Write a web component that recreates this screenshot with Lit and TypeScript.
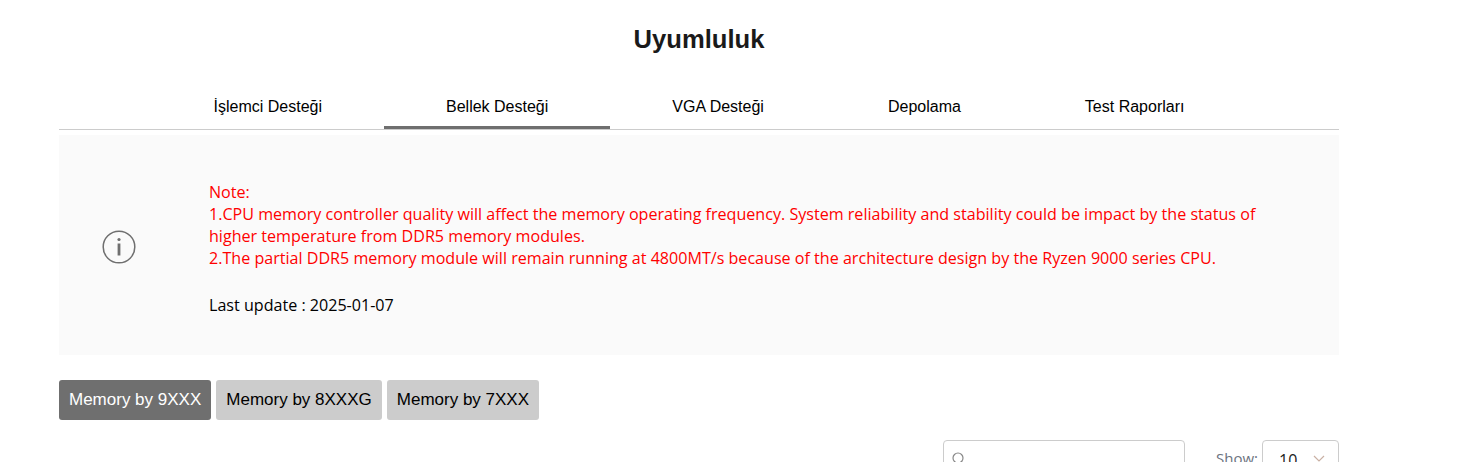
import { LitElement, html, css } from "lit";
import { customElement } from "lit/decorators.js";

@customElement("app-root")
export class AppRoot extends LitElement {
  static styles = css`
    :host { display: block; height: 462px; overflow: hidden; background: #fff; font-family: "Liberation Sans", Arial, sans-serif; color: #000; }
    .wrap { width: 1280px; margin-left: 59px; }
    h1 { margin: 0; padding-top: 24px; line-height: 30px; height: 30px; font-size: 25.6px; font-weight: 700; text-align: center; color: #1a1a1a; }
    .tabs { display: flex; justify-content: center; margin-top: 30px; border-bottom: 1px solid #ccc; height: 46px; box-sizing: border-box; }
    .tab { padding: 0 62px; font-size: 16px; line-height: 46px; height: 45px; box-sizing: border-box; white-space: nowrap; }
    .tab.active { border-bottom: 3px solid #6f6f6f; }
    .note { display: flex; align-items: center; margin-top: 5px; height: 220px; padding-top: 6px; background: #fafafa; box-sizing: border-box; }
    .ico { width: 120px; margin-right: 30px; padding-bottom: 2px; flex: none; display: flex; justify-content: center; }
    .ico svg { display: block; width: 34px; height: 34px; }
    .txt { flex: 1; padding-right: 70px; font-family: "Open Sans", sans-serif; font-size: 16.1px; line-height: 22px; color: #f00; }
    .txt p { margin: 0; }
    .upd { color: #000; margin-top: 25px !important; }
    .btns { display: flex; gap: 5px; margin-top: 25px; }
    .btn { height: 40px; line-height: 39px; padding: 0 10px; font-size: 17px; border-radius: 3px; background: #ccc; color: #000; white-space: nowrap; }
    .btn.active { background: #6f6f6f; color: #fff; }
    .tools { display: flex; justify-content: flex-end; align-items: flex-start; margin-top: 20px; }
    .search { width: 242px; height: 44px; box-sizing: border-box; border: 1px solid #ccc; border-radius: 4px; padding: 11px 8px; }
    .search svg { display: block; width: 14px; height: 14px; }
    .show { margin-left: 31px; padding-top: 8px; font-family: "Open Sans", sans-serif; font-size: 15px; color: #6c7380; }
    .sel { margin-left: 4px; width: 77px; height: 44px; box-sizing: border-box; border: 1px solid #ccc; border-radius: 4px; display: flex; align-items: flex-start; justify-content: space-between; padding: 8px 13px 0 16px; font-family: "Open Sans", sans-serif; font-size: 16px; color: #222; }
    .sel svg { width: 12px; height: 8px; margin-top: 6px; }
  `;
  render() {
    return html`<div class="wrap">
      <h1>Uyumluluk</h1>
      <div class="tabs">
        <div class="tab">İşlemci Desteği</div>
        <div class="tab active">Bellek Desteği</div>
        <div class="tab">VGA Desteği</div>
        <div class="tab">Depolama</div>
        <div class="tab">Test Raporları</div>
      </div>
      <div class="note">
        <div class="ico"><svg viewBox="0 0 34 34" fill="none"><circle cx="17" cy="17" r="15.8" stroke="#6f6f6f" stroke-width="1.5"/><rect x="15.6" y="13.5" width="2.8" height="12" fill="#6f6f6f"/><circle cx="17" cy="9.5" r="1.6" fill="#6f6f6f"/></svg></div>
        <div class="txt">
          <p>Note:<br>1.CPU memory controller quality will affect the memory operating frequency. System reliability and stability could be impact by the status of higher temperature from DDR5 memory modules.<br>2.The partial DDR5 memory module will remain running at 4800MT/s because of the architecture design by the Ryzen 9000 series CPU.</p>
          <p class="upd">Last update : 2025-01-07</p>
        </div>
      </div>
      <div class="btns">
        <div class="btn active">Memory by 9XXX</div>
        <div class="btn">Memory by 8XXXG</div>
        <div class="btn">Memory by 7XXX</div>
      </div>
      <div class="tools">
        <div class="search"><svg viewBox="0 0 14 14" fill="none" stroke="#888" stroke-width="1.2"><circle cx="6" cy="6" r="5"/><path d="M10 10l3 3"/></svg></div>
        <div class="show">Show:</div>
        <div class="sel">10<svg viewBox="0 0 12 8" fill="none" stroke="#c9b0a4" stroke-width="1.2"><path d="M1 1l5 5 5-5"/></svg></div>
      </div>
    </div>`;
  }
}
